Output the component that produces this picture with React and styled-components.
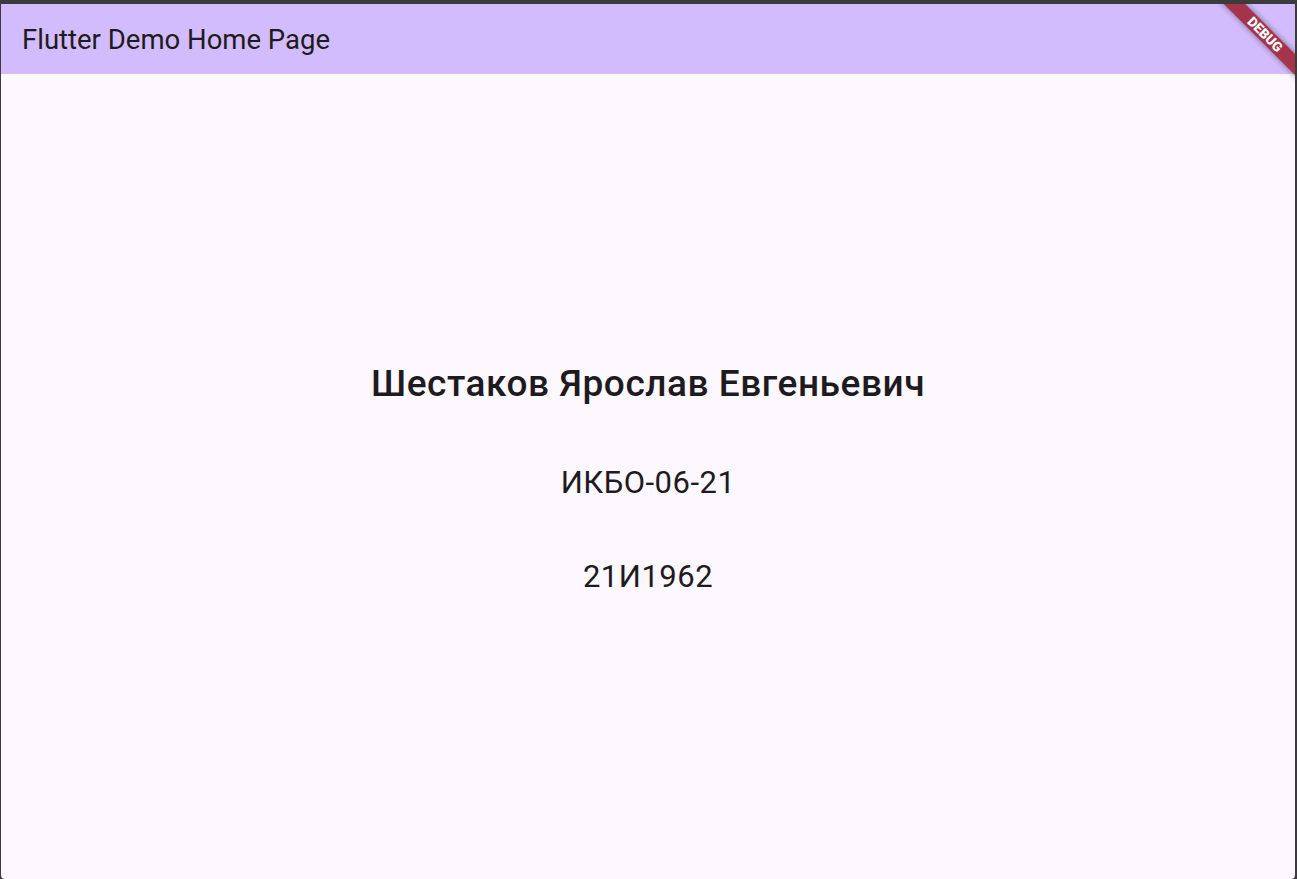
import styled, { createGlobalStyle } from "styled-components";

const GlobalStyle = createGlobalStyle`
  html, body {
    margin: 0;
    padding: 0;
    height: 100%;
  }
  body {
    font-family: Roboto, "Noto Sans", sans-serif;
    background: #3b3a3d;
  }
  #root {
    height: 100%;
  }
`;

const Frame = styled.div`
  height: 100vh;
  box-sizing: border-box;
  padding: 4px 2px 0 1px;
  background: #3b3a3d;
  display: flex;
`;

const Window = styled.div`
  position: relative;
  flex: 1;
  display: flex;
  flex-direction: column;
  background: #fdf7ff;
  border-radius: 0 0 4px 4px;
  overflow: hidden;
`;

const AppBar = styled.header`
  height: 70px;
  flex-shrink: 0;
  background: #d3bcfd;
  display: flex;
  align-items: center;
  padding-left: 21px;
`;

const Title = styled.h1`
  margin: 0;
  font-size: 27.5px;
  font-weight: 400;
  color: #1d1b20;
  letter-spacing: 0;
`;

const Body = styled.main`
  flex: 1;
  display: flex;
  flex-direction: column;
  align-items: center;
  justify-content: center;
  padding-top: 5px;
`;

const Name = styled.div`
  color: #1d1b20;
  font-size: 37px;
  font-weight: 500;
  line-height: 42px;
  letter-spacing: 0.55px;
  margin-bottom: 60px;
`;

const Line = styled.div`
  color: #1d1b20;
  font-size: 31px;
  font-weight: 400;
  line-height: 36px;
  letter-spacing: 0.5px;
  margin-bottom: ${(p) => (p.$last ? "0" : "58px")};
`;

const Banner = styled.div`
  position: absolute;
  top: 22.5px;
  right: -30px;
  width: 120px;
  height: 15px;
  transform: rotate(45deg);
  background: #a5334a;
  box-shadow: 0 0 6px rgba(0, 0, 0, 0.45);
  color: #fff;
  font-family: Roboto, "Liberation Sans", sans-serif;
  font-weight: 900;
  font-size: 13.5px;
  line-height: 15px;
  text-align: center;
`;

export default function App() {
  return (
    <>
      <GlobalStyle />
      <Frame>
        <Window>
          <AppBar>
            <Title>Flutter Demo Home Page</Title>
          </AppBar>
          <Body>
            <Name>Шестаков Ярослав Евгеньевич</Name>
            <Line>ИКБО-06-21</Line>
            <Line $last>21И1962</Line>
          </Body>
          <Banner>DEBUG</Banner>
        </Window>
      </Frame>
    </>
  );
}
